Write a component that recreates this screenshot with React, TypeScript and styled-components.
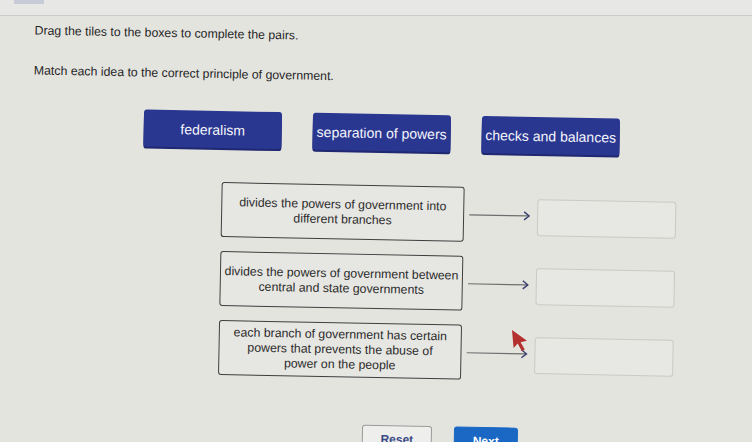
import styled, { createGlobalStyle } from 'styled-components'

const GlobalStyle = createGlobalStyle`
  html, body {
    margin: 0;
    padding: 0;
    background: #e4e4df;
  }
  * {
    box-sizing: border-box;
  }
`

const Page = styled.div`
  position: relative;
  width: 752px;
  height: 442px;
  overflow: hidden;
  background: #e4e4df;
  font-family: 'Liberation Sans', Arial, sans-serif;
  color: #2a2a2a;
`

const TopStrip = styled.div`
  height: 16px;
  background: #e7e7e5;
  border-bottom: 1px solid #cbcbc8;
  padding-left: 14px;
`

const Tab = styled.div`
  width: 30px;
  height: 4px;
  background: #c6cbd7;
`

const Content = styled.div`
  display: flex;
  flex-direction: column;
  padding-top: 13px;
  transform: rotate(1.1deg);
  transform-origin: 376px 205px;
`

const Instruction = styled.p<{ $top: number }>`
  margin: ${(p) => p.$top}px 0 0 31px;
  font-size: 12.3px;
  line-height: 16px;
  color: #262626;
`

const TileRow = styled.div`
  display: flex;
  gap: 31px;
  margin: 29px 0 0 142px;
`

const Tile = styled.div`
  width: 138px;
  height: 37px;
  display: flex;
  align-items: center;
  justify-content: center;
  background: #2a3791;
  border-radius: 3px;
  box-shadow: 0 2px 0 #1f2870;
  color: #f4f5fb;
  font-size: 14px;
  white-space: nowrap;
`

const Pairs = styled.div`
  display: flex;
  flex-direction: column;
  gap: 14px;
  margin: 34px 0 0 221px;
`

const PairRow = styled.div`
  display: flex;
  align-items: center;
`

const IdeaBox = styled.div`
  width: 243px;
  height: 55px;
  display: flex;
  flex-direction: column;
  align-items: center;
  justify-content: center;
  text-align: center;
  border: 1.5px solid #3f3f3f;
  border-radius: 3px;
  background: #e6e6e2;
  font-size: 12.3px;
  line-height: 15px;
  color: #2b2b2b;
  white-space: nowrap;
`

const ArrowWrap = styled.div`
  width: 62px;
  height: 12px;
  margin: 0 6px 0 5px;
  display: flex;
`

const DropBox = styled.div`
  width: 139px;
  height: 37px;
  margin-top: 4px;
  border: 1px solid #cacac5;
  border-radius: 3px;
  background: #e7e7e3;
`

const ButtonRow = styled.div`
  display: flex;
  gap: 22px;
  margin: 47px 0 0 366px;
`

const Button = styled.div<{ $primary?: boolean }>`
  width: ${(p) => (p.$primary ? 64 : 70)}px;
  height: 30px;
  display: flex;
  justify-content: center;
  padding-top: 6px;
  border-radius: 3px;
  font-size: 12px;
  font-weight: 700;
  background: ${(p) => (p.$primary ? '#1a68c4' : '#eeeeec')};
  border: 1px solid ${(p) => (p.$primary ? '#1a68c4' : '#9a9a9a')};
  color: ${(p) => (p.$primary ? '#ffffff' : '#3c4c86')};
`

const Cursor = styled.svg`
  position: absolute;
  left: 510px;
  top: 329px;
`

const Arrow = () => (
  <svg width="62" height="12" viewBox="0 0 62 12">
    <line x1="0" y1="6" x2="60" y2="6" stroke="#6e6e6e" strokeWidth="1.2" />
    <polyline points="55,2 60,6 55,10" fill="none" stroke="#3b4070" strokeWidth="1.4" />
  </svg>
)

const pairs = [
  ['divides the powers of government into', 'different branches'],
  ['divides the powers of government between', 'central and state governments'],
  ['each branch of government has certain', 'powers that prevents the abuse of', 'power on the people'],
]

export default function App() {
  return (
    <Page>
      <GlobalStyle />
      <TopStrip>
        <Tab />
      </TopStrip>
      <Content>
        <Instruction $top={0}>Drag the tiles to the boxes to complete the pairs.</Instruction>
        <Instruction $top={24}>Match each idea to the correct principle of government.</Instruction>

        <TileRow>
          <Tile>federalism</Tile>
          <Tile>separation of powers</Tile>
          <Tile>checks and balances</Tile>
        </TileRow>

        <Pairs>
          {pairs.map((lines, i) => (
            <PairRow key={i}>
              <IdeaBox>
                {lines.map((l, j) => (
                  <span key={j}>{l}</span>
                ))}
              </IdeaBox>
              <ArrowWrap>
                <Arrow />
              </ArrowWrap>
              <DropBox />
            </PairRow>
          ))}
        </Pairs>

        <ButtonRow>
          <Button>Reset</Button>
          <Button $primary>Next</Button>
        </ButtonRow>
      </Content>

      <Cursor width="18" height="26" viewBox="0 0 18 26">
        <polygon points="2,1 2,19 6.5,15 10,23 13,21.5 9.5,14 16,13" fill="#b3302e" transform="rotate(-5 2 1)" />
      </Cursor>
    </Page>
  )
}
